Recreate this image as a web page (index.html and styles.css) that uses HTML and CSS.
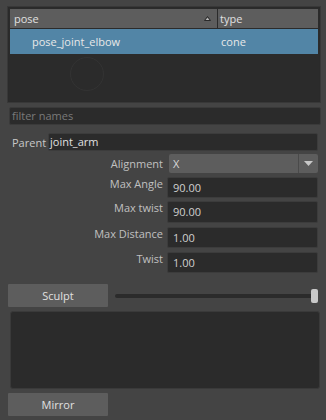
FILE: index.html
```html
<!DOCTYPE html>
<html>
<head>
<meta charset="utf-8">
<link rel="stylesheet" href="styles.css">
</head>
<body>
<div class="panel">
  <div class="table">
    <div class="thead">
      <div class="th th-pose">pose
        <svg class="sort" width="7" height="5" viewBox="0 0 7 5"><path d="M3.5 0.5 L6.5 4.5 L0.5 4.5 Z" fill="none" stroke="#2a2a2a" stroke-width="1"/><path d="M3.5 1.8 L5.3 4 L1.7 4 Z" fill="#bdbdbd"/></svg>
      </div>
      <div class="th th-type">type</div>
    </div>
    <div class="row selected">
      <div class="td td-pose">pose_joint_elbow</div>
      <div class="td td-type">cone</div>
    </div>
    <div class="tbody">
      <svg class="ghost" width="36" height="36" viewBox="0 0 36 36"><circle cx="18" cy="18" r="16.5" fill="none" stroke="#333" stroke-width="1"/></svg>
    </div>
  </div>

  <div class="filter">filter names</div>

  <div class="parent-row">
    <span class="parent-label">Parent</span>
    <div class="parent-field">joint_arm</div>
  </div>

  <div class="form">
    <div class="frow frow-combo">
      <span class="flabel flabel-mid">Alignment</span>
      <div class="combo"><span class="combo-val">X</span><span class="combo-btn"><svg width="9" height="5" viewBox="0 0 9 5"><path d="M0 0 H9 L4.5 5 Z" fill="#c8c8c8"/></svg></span></div>
    </div>
    <div class="frow r1">
      <span class="flabel">Max Angle</span>
      <div class="field">90.00</div>
    </div>
    <div class="frow r2">
      <span class="flabel">Max twist</span>
      <div class="field tall">90.00</div>
    </div>
    <div class="frow r3">
      <span class="flabel">Max Distance</span>
      <div class="field">1.00</div>
    </div>
    <div class="frow r4">
      <span class="flabel">Twist</span>
      <div class="field">1.00</div>
    </div>
  </div>

  <div class="sculpt-row">
    <div class="btn">Sculpt</div>
    <div class="slider"><div class="track"></div><div class="handle"></div></div>
  </div>

  <div class="textarea"></div>

  <div class="btn mirror">Mirror</div>
</div>
</body>
</html>
```

FILE: styles.css
```css
html, body {
  margin: 0;
  padding: 0;
  background: #444444;
  width: 326px;
  height: 420px;
  overflow: hidden;
}
body {
  font-family: "Open Sans", "DejaVu Sans", sans-serif;
  font-size: 11px;
  color: #c8c8c8;
}
.panel {
  display: flex;
  flex-direction: column;
}

/* table */
.table {
  margin: 6px 5px 0 7px;
  height: 97px;
  box-sizing: border-box;
  border: 1px solid #383838;
  background: #2b2b2b;
  display: flex;
  flex-direction: column;
  padding: 1px;
  box-shadow: inset 0 0 0 1px #2a2a2a;
}
.thead {
  display: flex;
  height: 19px;
  background: #5d5d5d;
  border-bottom: 1px solid #2b2b2b;
  margin: 1px 1px 0 1px;
}
.th {
  display: flex;
  align-items: center;
  color: #e0e0e0;
  line-height: 19px;
}
.th-pose {
  width: 208px;
  padding-left: 4px;
  box-sizing: border-box;
  border-right: 1px solid #2b2b2b;
  position: relative;
}
.sort {
  position: absolute;
  left: 194px;
  top: 7px;
}
.th-type {
  flex: 1;
  padding-left: 2px;
}
.row {
  display: flex;
  height: 25px;
  margin: 0 1px;
}
.selected {
  background: #5285a6;
}
.td {
  color: #e8e8e8;
  line-height: 25px;
}
.td-pose {
  width: 209px;
  padding-left: 22px;
  box-sizing: border-box;
}
.td-type {
  flex: 1;
  padding-left: 2px;
}
.tbody {
  flex: 1;
  padding-left: 60px;
  padding-top: 2px;
}
.ghost {
  display: block;
}

/* filter */
.filter {
  margin: 4px 5px 0 9px;
  height: 18px;
  box-sizing: border-box;
  background: #2b2b2b;
  border: 1px solid #3a3a3a;
  border-radius: 2px;
  color: #7a7a7a;
  padding-left: 2px;
  line-height: 16px;
}

/* parent */
.parent-row {
  display: flex;
  align-items: center;
  margin: 8px 8px 0 12px;
  height: 18px;
}
.parent-label {
  width: 36px;
  color: #c8c8c8;
}
.parent-field {
  flex: 1;
  height: 18px;
  box-sizing: border-box;
  background: #2b2b2b;
  border: 1px solid #3c3c3c;
  border-radius: 2px;
  color: #e0e0e0;
  padding-left: 1px;
  line-height: 16px;
}

/* form */
.form {
  display: flex;
  flex-direction: column;
  margin-right: 8px;
}
.frow {
  display: flex;
  align-items: flex-start;
}
.flabel {
  width: 163px;
  text-align: right;
  color: #c0c0c0;
  line-height: 14px;
  flex-shrink: 0;
}
.flabel-mid {
  align-self: center;
}
.frow-combo {
  margin-top: 3px;
  height: 19px;
}
.combo {
  margin-left: 6px;
  flex: 1;
  height: 19px;
  display: flex;
  background: #5d5d5d;
  border-radius: 2px;
}
.combo-val {
  flex: 1;
  color: #d8d8d8;
  padding-left: 4px;
  line-height: 19px;
  border-right: 1px solid #4a4a4a;
}
.combo-btn {
  width: 19px;
  display: flex;
  align-items: center;
  justify-content: center;
}
.field {
  margin-left: 4px;
  flex: 1;
  height: 21px;
  box-sizing: border-box;
  background: #2b2b2b;
  border: 1px solid #3c3c3c;
  border-radius: 2px;
  color: #d0d0d0;
  padding-left: 5px;
  line-height: 19px;
}
.field.tall {
  height: 22px;
  line-height: 20px;
}
.r1 { margin-top: 4px; }
.r2 { margin-top: 3px; }
.r3 { margin-top: 4px; }
.r4 { margin-top: 4px; }

/* sculpt */
.sculpt-row {
  display: flex;
  align-items: center;
  margin: 11px 8px 0 8px;
  height: 23px;
}
.btn {
  width: 100px;
  height: 23px;
  background: #5d5d5d;
  color: #e0e0e0;
  text-align: center;
  line-height: 23px;
  border-radius: 1px;
}
.slider {
  flex: 1;
  margin-left: 7px;
  height: 14px;
  position: relative;
}
.track {
  position: absolute;
  left: 0;
  right: 2px;
  top: 5px;
  height: 4px;
  background: #2b2b2b;
  border-radius: 2px;
}
.handle {
  position: absolute;
  right: 0;
  top: 0;
  width: 7px;
  height: 14px;
  background: #c8c8c8;
  border-radius: 2px;
}

/* text area */
.textarea {
  margin: 4px 6px 0 10px;
  height: 78px;
  box-sizing: border-box;
  background: #2b2b2b;
  border: 1px solid #3a3a3a;
  border-radius: 3px;
}
.mirror {
  margin: 4px 0 0 8px;
}
```
